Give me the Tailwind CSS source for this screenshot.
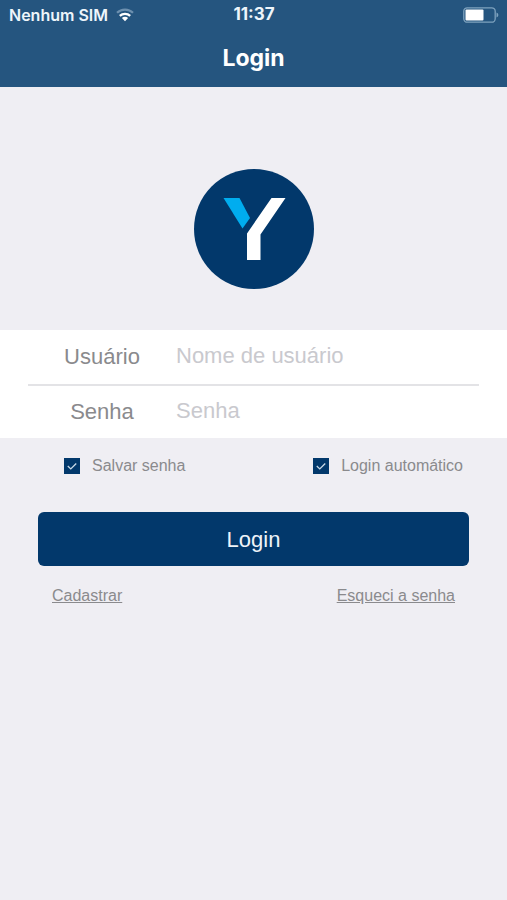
<!DOCTYPE html>
<html lang="pt-BR">
<head>
  <meta charset="UTF-8" />
  <meta name="viewport" content="width=device-width, initial-scale=1.0" />
  <title>Login</title>
  <script src="https://cdn.jsdelivr.net/npm/@tailwindcss/browser@4"></script>
</head>
<body class="min-h-screen bg-[#efeef3] font-['Liberation_Sans',Arial,sans-serif] text-[#8a8a8d]">

  <header class="bg-[#25557f] text-white font-[Inter,sans-serif]">
    <!-- Status bar -->
    <div class="grid grid-cols-3 items-center h-[30px] pl-[9px] pr-2 text-base text-[#eef5fb]">
      <div class="flex items-center gap-2 whitespace-nowrap font-semibold">
        <span>Nenhum SIM</span>
        <svg class="w-[18px] h-[14px] shrink-0" viewBox="0 0 18 14" fill="none" stroke-width="2.2">
          <path d="M1 4.8a11.5 11.5 0 0 1 16 0" stroke="#6d90af" />
          <path d="M3.8 7.9a7.5 7.5 0 0 1 10.4 0" stroke="#fff" />
          <path d="M9 13.2 5.9 10.1a4.4 4.4 0 0 1 6.2 0z" fill="#fff" />
        </svg>
      </div>
      <span class="text-center text-[17px] font-bold">11:37</span>
      <svg class="w-[36px] h-4 justify-self-end" viewBox="0 0 36 16">
        <rect x="0.8" y="0.8" width="31.4" height="14.4" rx="3.5" fill="none" stroke="#7fa3bf" stroke-width="1.3" />
        <rect x="2.5" y="2.5" width="18" height="11" rx="1" fill="#fff" />
        <path d="M33.5 5.5a2.6 2.6 0 0 1 0 5z" fill="#7fa3bf" />
      </svg>
    </div>
    <h1 class="h-[57px] text-center text-[23px] leading-[56px] font-bold">Login</h1>
  </header>

  <main>
    <svg class="mx-auto mt-[82px] mb-10 w-[121px] h-[121px]" viewBox="0 0 121 121" role="img" aria-label="Y">
      <circle cx="61" cy="60" r="60" fill="#02386b" />
      <path d="M30.5 29H46.5L57 49 49.5 59.5z" fill="#00adef" />
      <path d="M78.5 29H92.5L67.5 65.5V91H54V64.5z" fill="#fff" />
    </svg>

    <form>
      <div class="bg-white px-7">
        <div class="flex items-center h-[54px] text-[22px]">
          <label for="usuario" class="w-[148px] shrink-0 pb-0.5 text-center">Usuário</label>
          <input type="text" id="usuario" name="usuario" placeholder="Nome de usuário" class="min-w-0 flex-1 pb-1 outline-none placeholder:text-[#c9c9ce]" />
        </div>
        <div class="flex items-center h-[54px] text-[22px] border-t-2 border-[#e3e3e6]">
          <label for="senha" class="w-[148px] shrink-0 pb-0.5 text-center">Senha</label>
          <input type="password" id="senha" name="senha" placeholder="Senha" class="min-w-0 flex-1 pb-1 outline-none placeholder:text-[#c9c9ce]" />
        </div>
      </div>

      <div class="flex justify-between pt-4 pl-16 pr-11 text-base">
        <label class="flex items-center gap-3">
          <span class="grid size-4">
            <input type="checkbox" name="salvar" checked class="peer col-start-1 row-start-1 size-4 appearance-none bg-white checked:bg-[#02386b]" />
            <svg class="col-start-1 row-start-1 size-4 pointer-events-none invisible peer-checked:visible" viewBox="0 0 17 17" fill="none" stroke="#c9dae8" stroke-width="1.4"><path d="M4 8.6 7.2 11.6 13 5.8" /></svg>
          </span>
          Salvar senha
        </label>
        <label class="flex items-center gap-3">
          <span class="grid size-4">
            <input type="checkbox" name="automatico" checked class="peer col-start-1 row-start-1 size-4 appearance-none bg-white checked:bg-[#02386b]" />
            <svg class="col-start-1 row-start-1 size-4 pointer-events-none invisible peer-checked:visible" viewBox="0 0 17 17" fill="none" stroke="#c9dae8" stroke-width="1.4"><path d="M4 8.6 7.2 11.6 13 5.8" /></svg>
          </span>
          Login automático
        </label>
      </div>

      <div class="px-[38px] pt-[34px]">
        <button type="submit" class="w-full h-[54px] rounded-md bg-[#02386b] text-[22px] text-[#eef3f8]">Login</button>
      </div>
    </form>

    <div class="flex justify-between px-[52px] pt-[18px] text-base">
      <a href="#cadastrar" class="underline">Cadastrar</a>
      <a href="#esqueci" class="underline">Esqueci a senha</a>
    </div>
  </main>

</body>
</html>
